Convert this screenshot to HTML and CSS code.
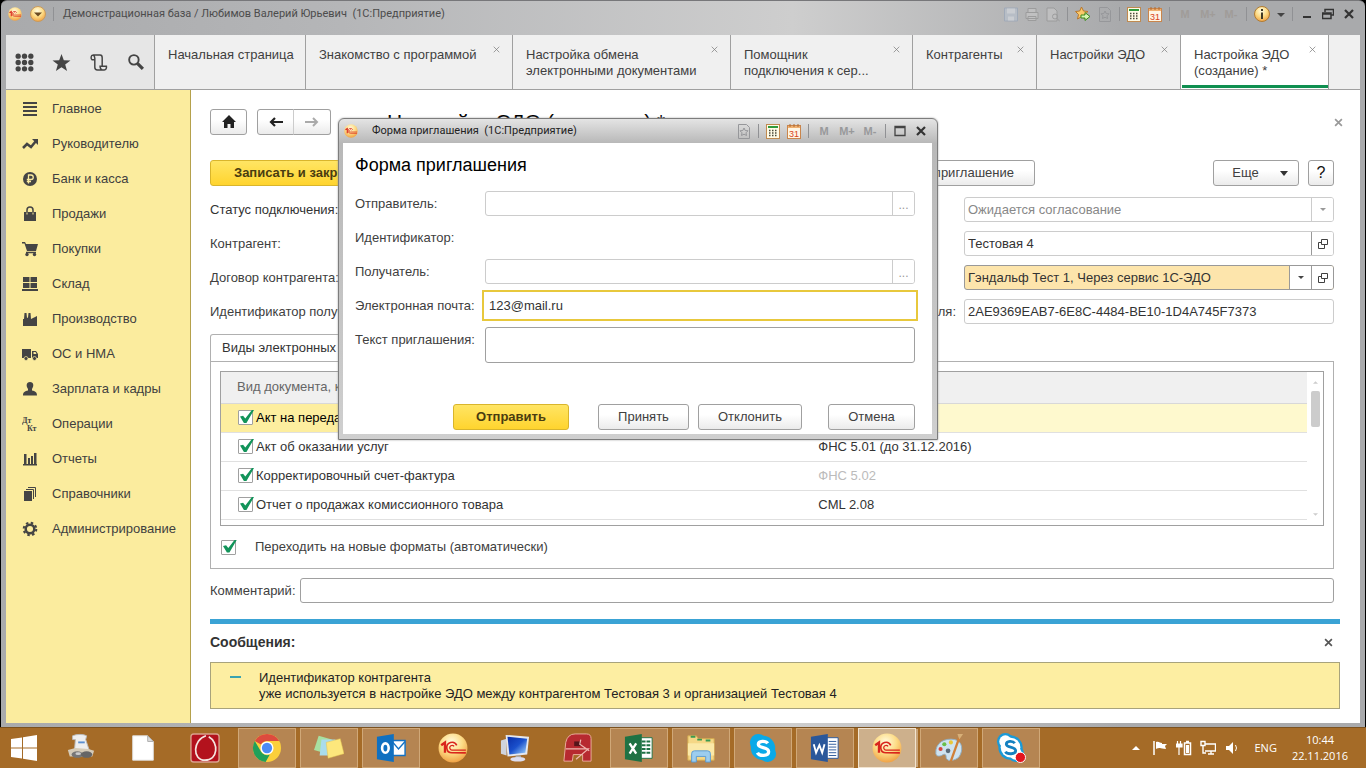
FILE: index.html
```
<!DOCTYPE html>
<html lang="ru">
<head>
  <meta charset="UTF-8">
  <meta name="viewport" content="width=device-width, initial-scale=1.0">
  <title>Демонстрационная база (1С:Предприятие)</title>
  <link rel="stylesheet" href="styles.css">
</head>
<body>

  <!-- shared icons -->
  <svg width="0" height="0" class="defs" aria-hidden="true">
    <defs>
      <radialGradient id="gold" cx="45%" cy="30%" r="75%">
        <stop offset="0" stop-color="#fffbe0"/>
        <stop offset="0.5" stop-color="#fddc86"/>
        <stop offset="1" stop-color="#ee9a3c"/>
      </radialGradient>
      <linearGradient id="screen" x1="0" y1="0" x2="1" y2="1">
        <stop offset="0" stop-color="#0a2ea8"/>
        <stop offset="0.5" stop-color="#1a50cc"/>
        <stop offset="1" stop-color="#a8dcff"/>
      </linearGradient>
    </defs>
    <symbol id="logo1c" viewBox="0 0 28 28">
      <circle cx="14" cy="14" r="13.500" fill="url(#gold)"/>
      <path d="M3 11.500l3.500-2.500v9.500" fill="none" stroke="#d9251c" stroke-width="2.200"/>
      <path d="M17.500 11.500a4.900 4.900 0 1 0-4.500 7h13" fill="none" stroke="#d9251c" stroke-width="1.500"/>
      <path d="M15 12.500a2.200 2.200 0 1 0-2 3.400h13" fill="none" stroke="#d9251c" stroke-width="1.200"/>
    </symbol>
    <symbol id="calc" viewBox="0 0 14 15">
      <rect x="0.500" y="0.500" width="13" height="14" fill="#fffbe6" stroke="#c08a50"/>
      <path d="M2 3h10" stroke="#2f9a3c" stroke-width="2"/>
      <path d="M3 6.500h9M3 9h9M3 11.500h9" stroke="#4a4a3a" stroke-width="1.500" stroke-dasharray="1.500 1.500"/>
    </symbol>
    <symbol id="calendar" viewBox="0 0 14 15">
      <rect x="0.500" y="1.500" width="13" height="13" fill="#fff6e4" stroke="#c9854c"/>
      <path d="M1 3h12" stroke="#f0b070" stroke-width="2"/>
      <path d="M3 0v3M7 0v3M11 0v3" stroke="#b06a30"/>
      <text x="7" y="13" text-anchor="middle" font-size="9" fill="#d8431c">31</text>
    </symbol>
    <symbol id="star-page" viewBox="0 0 14 15">
      <path d="M1.500.5h8l3 3v11h-11z" fill="none" stroke="currentColor"/>
      <path d="M7 4l1.200 2.500 2.800.3-2 2 .5 2.700L7 10.200l-2.500 1.300.5-2.700-2-2 2.800-.3z" fill="none" stroke="currentColor"/>
    </symbol>
    <symbol id="cross" viewBox="0 0 10 10">
      <path d="M1 1l8 8M9 1l-8 8" stroke="currentColor" fill="none"/>
    </symbol>
    <symbol id="open" viewBox="0 0 10 10">
      <path d="M3.500.5h6v5h-6zM3 3.500H.5v6h6V6" fill="none" stroke="currentColor"/>
    </symbol>
  </svg>

  <div class="window">
    <header class="titlebar">
      <svg class="logo"><use href="#logo1c"/></svg>
      <button class="round" aria-label="Меню"><svg viewBox="0 0 16 16"><circle cx="8" cy="8" r="7.500" fill="url(#gold)" stroke="#c99a5c"/><path d="M4 6.500h8L8 10.500z" fill="#6b4a22"/></svg></button>
      <i class="sep"></i>
      <span class="title">Демонстрационная база / Любимов Валерий Юрьевич&nbsp; (1С:Предприятие)</span>
      <div class="sys">
        <svg class="w14 pale" viewBox="0 0 14 14"><path d="M.5.500h13v13H.500z" fill="#b9c3d0" stroke="#92a2b8"/><path d="M3 1h8v5H3zM4 9h6v4H4z" fill="#d8dde4"/></svg>
        <svg class="w14 pale" viewBox="0 0 14 14"><path d="M3 1h8v4H3zM1 5h12v6H1zM3 9h8v4H3z" fill="#c9c9c9" stroke="#8d8d8d"/></svg>
        <svg class="w14 pale" viewBox="0 0 14 14"><path d="M1 .5h7l3 3v10H1z" fill="#c9c9c9" stroke="#8d8d8d"/><circle cx="9" cy="9" r="2.500" fill="none" stroke="#8d8d8d"/><path d="M11 11l3 3" stroke="#8d8d8d"/></svg>
        <i class="sep"></i>
        <svg class="w16" viewBox="0 0 16 16"><path d="M6.500 1l2 4 4.500.5-3.500 3 1 4.500-4-2.300L2.500 13l1-4.500L.5 5.500l4.200-.5z" fill="#fbc96a" stroke="#b8762a"/><path d="M6 9h4V6.500l5 4-5 4V12H6z" fill="#d8f5b0" stroke="#3b8a1e"/></svg>
        <svg class="w14 dim"><use href="#star-page"/></svg>
        <i class="sep"></i>
        <svg class="w14"><use href="#calc"/></svg>
        <svg class="w14"><use href="#calendar"/></svg>
        <i class="sep"></i>
        <span class="mem">M</span><span class="mem">M+</span><span class="mem">M-</span>
        <i class="sep"></i>
        <svg class="w16" viewBox="0 0 16 16"><circle cx="8" cy="8" r="7.500" fill="url(#gold)" stroke="#b07c34"/><path d="M8 3v2M8 6.500V13" stroke="#3f3a28" stroke-width="2"/></svg>
        <svg class="w8" viewBox="0 0 8 8"><path d="M0 3h8L4 7z" fill="#444"/></svg>
        <i class="sep"></i>
        <button aria-label="Свернуть"><svg class="w12" viewBox="0 0 12 12"><path d="M2 9h8" stroke="#333" stroke-width="2"/></svg></button>
        <button aria-label="Восстановить"><svg class="w12" viewBox="0 0 12 12"><path d="M3 4V1.500h8.500V7H9M.5 5h8.500v5.500H.5zM.5 6H9" fill="none" stroke="#333" stroke-width="1.500"/></svg></button>
        <button aria-label="Закрыть"><svg class="w12" viewBox="0 0 12 12"><path d="M2 2l8 8M10 2l-8 8" stroke="#333" stroke-width="2.200"/></svg></button>
      </div>
    </header>

    <nav class="tabs">
      <div class="tools">
        <svg viewBox="0 0 18 18"><g fill="#444"><circle cx="3" cy="3" r="2.500"/><circle cx="9" cy="3" r="2.500"/><circle cx="15" cy="3" r="2.500"/><circle cx="3" cy="9" r="2.500"/><circle cx="9" cy="9" r="2.500"/><circle cx="15" cy="9" r="2.500"/><circle cx="3" cy="15" r="2.500"/><circle cx="9" cy="15" r="2.500"/><circle cx="15" cy="15" r="2.500"/></g></svg>
        <svg viewBox="0 0 18 18"><path d="M9 1l2.200 5.800 6.300.2-5 3.900 1.800 6.100L9 13.500 3.700 17l1.800-6.100L.5 7l6.300-.2z" fill="#444"/></svg>
        <svg viewBox="0 0 18 18"><path d="M5.500 6.500H3C1.500 5.500 1.500 2 4 2h6.500C12 2 12.500 3 12.500 4.500v8h4c.3 2-.5 3.500-2 3.500H8c-1.500 0-2.500-1-2.500-2.500V5c0-1.500-.5-2.500-1.500-3M12.500 12.500h-2c0 1.500.5 3 2 3.500" fill="none" stroke="#444" stroke-width="1.400"/></svg>
        <svg viewBox="0 0 18 18"><circle cx="7.500" cy="6.500" r="4.500" fill="none" stroke="#444" stroke-width="1.800"/><path d="M11 10l5 5" stroke="#444" stroke-width="3"/></svg>
      </div>
      <a href="#" class="tab t-home">Начальная страница</a>
      <a href="#" class="tab t-intro">Знакомство с программой<svg><use href="#cross"/></svg></a>
      <a href="#" class="tab t-exchange">Настройка обмена электронными документами<svg><use href="#cross"/></svg></a>
      <a href="#" class="tab t-helper">Помощник подключения к сер...<svg><use href="#cross"/></svg></a>
      <a href="#" class="tab t-partners">Контрагенты<svg><use href="#cross"/></svg></a>
      <a href="#" class="tab t-settings">Настройки ЭДО<svg><use href="#cross"/></svg></a>
      <a href="#" class="tab t-create active">Настройка ЭДО (создание) *<svg><use href="#cross"/></svg></a>
    </nav>

    <div class="workspace">
      <nav class="sidebar">
        <a href="#"><svg viewBox="0 0 16 16"><path d="M1 2h14M1 6h14M1 10h14M1 14h14" stroke="#444" stroke-width="2"/></svg>Главное</a>
        <a href="#"><svg viewBox="0 0 16 16"><path d="M1 12l4-4 4 3 5-6" fill="none" stroke="#444" stroke-width="2.500"/><path d="M10 3h6v6z" fill="#444"/></svg>Руководителю</a>
        <a href="#"><svg viewBox="0 0 16 16"><circle cx="8" cy="8" r="7" fill="#444"/><path d="M6.500 12.500V4h2.500a2.200 2.200 0 0 1 0 4.500H4.800M4.800 10.500H9" fill="none" stroke="#fbec9e" stroke-width="1.300"/></svg>Банк и касса</a>
        <a href="#"><svg viewBox="0 0 16 16"><path d="M2 6h12v9H2z" fill="#444"/><path d="M5 8V4a3 3 0 0 1 6 0v4" fill="none" stroke="#444" stroke-width="1.500"/><path d="M5 6.500v2M11 6.500v2" stroke="#fbec9e"/></svg>Продажи</a>
        <a href="#"><svg viewBox="0 0 16 16"><path d="M0 1h3l1 2h12l-2 7H5L2.500 2.500H0z" fill="#444"/><path d="M4 11.500h10" stroke="#444" stroke-width="1.500"/><circle cx="5" cy="13.500" r="1.700" fill="#444"/><circle cx="12.500" cy="13.500" r="1.700" fill="#444"/></svg>Покупки</a>
        <a href="#"><svg viewBox="0 0 16 16"><path d="M1 1h6.500v5H1zM8.500 1H15v5H8.500zM1 7h6.500v5H1zM8.500 7H15v5H8.500zM0 13h16v2H0z" fill="#444"/></svg>Склад</a>
        <a href="#"><svg viewBox="0 0 16 16"><path d="M1 15V8h1l.5-6h2L5 7l1-.5L6.500 2h2L9 8l6-3v10z" fill="#444"/></svg>Производство</a>
        <a href="#"><svg viewBox="0 0 16 16"><path d="M0 3h9v9H0zM10 5h4l2 3v4h-6z" fill="#444"/><circle cx="4" cy="12.500" r="2" fill="#444" stroke="#fbec9e" stroke-width=".7"/><circle cx="12.500" cy="12.500" r="2" fill="#444" stroke="#fbec9e" stroke-width=".7"/><path d="M11.500 6h2l1 2h-3z" fill="#fbec9e"/></svg>ОС и НМА</a>
        <a href="#"><svg viewBox="0 0 16 16"><path d="M8 1c4 0 4 4 2 7v1.500c3 .5 5 1.500 5 5H1c0-3.500 2-4.500 5-5V8C4 5 4 1 8 1z" fill="#444"/></svg>Зарплата и кадры</a>
        <a href="#"><svg viewBox="0 0 16 16" font-size="8" font-weight="bold" fill="#444"><text x="0" y="7" class="serif">Дт</text><text x="5" y="15" class="serif">Кт</text></svg>Операции</a>
        <a href="#"><svg viewBox="0 0 16 16"><path d="M1 13h14v1.500H1zM2 3h2.500v10H2zM6 7h2v6H6zM9 5h2v8H9zM12 2h2.500v11H12z" fill="#444"/></svg>Отчеты</a>
        <a href="#"><svg viewBox="0 0 16 16"><path d="M2 5h8v10H2z" fill="#444"/><path d="M4 3.500h7.500V13M6 1.500h7.500V11" fill="none" stroke="#444"/></svg>Справочники</a>
        <a href="#"><svg viewBox="0 0 16 16"><circle cx="8" cy="8" r="4.300" fill="none" stroke="#444" stroke-width="2.500"/><circle cx="8" cy="8" r="6.300" fill="none" stroke="#444" stroke-width="2" stroke-dasharray="2.500 2.450"/></svg>Администрирование</a>
      </nav>

      <main class="content">
        <div class="heading">
          <button class="btn home" aria-label="Домой"><svg viewBox="0 0 14 14"><path d="M7 0l7 7h-2v6H8.500V9h-3v4H2V7H0z" fill="#222"/></svg></button>
          <div class="history">
            <button class="btn" aria-label="Назад"><svg viewBox="0 0 14 12"><path d="M14 6H3M6 2L2 6l4 4" fill="none" stroke="#222" stroke-width="2.200"/></svg></button>
            <button class="btn" aria-label="Вперед"><svg viewBox="0 0 14 12"><path d="M0 6h11M8 2l4 4-4 4" fill="none" stroke="#aaa" stroke-width="2"/></svg></button>
          </div>
          <h1>Настройка ЭДО (создание) *</h1>
          <button class="plain close-form" aria-label="Закрыть форму"><svg viewBox="0 0 8 8"><path d="M1 1l6 6M7 1l-6 6" stroke="#999" stroke-width="1.500"/></svg></button>
        </div>

        <div class="commands">
          <button class="btn primary">Записать и закрыть</button>
          <button class="btn send">Отправить приглашение</button>
          <button class="btn more">Еще <svg viewBox="0 0 8 5"><path d="M0 0h8L4 5z" fill="#333"/></svg></button>
          <button class="btn help">?</button>
        </div>

        <div class="fields">
          <label class="strong" for="state">Статус подключения:</label>
          <div class="field disabled last">
            <select id="state" disabled><option>Ожидается согласование</option></select>
            <span class="pick"><svg class="arrow" viewBox="0 0 6 3"><path d="M0 0h6L3 3z" fill="#999"/></svg></span>
          </div>
          <label for="partner">Контрагент:</label>
          <div class="field last">
            <input id="partner" type="text" value="Тестовая 4">
            <button class="pick" aria-label="Открыть"><svg><use href="#open"/></svg></button>
          </div>
          <label for="contract">Договор контрагента:</label>
          <div class="field marked last">
            <select id="contract"><option>Гэндальф Тест 1, Через сервис 1С-ЭДО</option></select>
            <span class="pick"><svg class="arrow" viewBox="0 0 6 3"><path d="M0 0h6L3 3z" fill="#444"/></svg></span>
            <button class="pick" aria-label="Открыть"><svg><use href="#open"/></svg></button>
          </div>
          <label for="rcpt">Идентификатор получателя:</label>
          <label class="right" for="sender-id">Идентификатор отправителя:</label>
          <div class="field last"><input id="sender-id" type="text" value="2AE9369EAB7-6E8C-4484-BE10-1D4A745F7373"></div>
        </div>

        <section class="docs">
          <a href="#" class="docs-tab">Виды электронных документов</a>
          <div class="docs-panel">
            <div class="grid">
              <table>
                <thead>
                  <tr><th>Вид документа, каталог</th><th></th></tr>
                </thead>
                <tbody>
                  <tr class="current"><td><label><input type="checkbox" checked>Акт на передачу прав</label></td><td></td></tr>
                  <tr><td><label><input type="checkbox" checked>Акт об оказании услуг</label></td><td>ФНС 5.01 (до 31.12.2016)</td></tr>
                  <tr><td><label><input type="checkbox" checked>Корректировочный счет-фактура</label></td><td class="muted">ФНС 5.02</td></tr>
                  <tr><td><label><input type="checkbox" checked>Отчет о продажах комиссионного товара</label></td><td>CML 2.08</td></tr>
                </tbody>
              </table>
              <div class="scroll">
                <svg viewBox="0 0 6 3"><path d="M0 3h6L3 0z" fill="#ccc"/></svg>
                <i></i>
                <svg viewBox="0 0 6 3"><path d="M0 0h6L3 3z" fill="#ccc"/></svg>
              </div>
            </div>
            <label class="auto"><input type="checkbox" checked>Переходить на новые форматы (автоматически)</label>
          </div>
        </section>

        <div class="comment">
          <label for="comment">Комментарий:</label>
          <div class="field dark"><input id="comment" type="text"></div>
        </div>

        <section class="messages">
          <div class="messages-head">
            <h2>Сообщения:</h2>
            <button class="plain" aria-label="Закрыть сообщения"><svg viewBox="0 0 8 8"><path d="M1 1l6 6M7 1l-6 6" stroke="#555" stroke-width="1.500"/></svg></button>
          </div>
          <div class="message">
            <i></i>
            <p>Идентификатор контрагента<br>уже используется в настройке ЭДО между контрагентом Тестовая 3 и организацией Тестовая 4</p>
          </div>
        </section>
      </main>
    </div>

    <div class="dialog" role="dialog" aria-labelledby="dialog-title">
      <div class="dialog-bar">
        <svg class="logo"><use href="#logo1c"/></svg>
        <span class="title">Форма приглашения&nbsp; (1С:Предприятие)</span>
        <div class="sys">
          <svg class="w14 dim"><use href="#star-page"/></svg>
          <i class="sep"></i>
          <svg class="w14"><use href="#calc"/></svg>
          <svg class="w14"><use href="#calendar"/></svg>
          <i class="sep"></i>
          <span class="mem">M</span><span class="mem">M+</span><span class="mem">M-</span>
          <i class="sep"></i>
          <button aria-label="Развернуть"><svg class="w12" viewBox="0 0 12 12"><path d="M1 1.500h10v9H1zM1 2.500h10" fill="none" stroke="#444" stroke-width="1.300"/></svg></button>
          <button aria-label="Закрыть"><svg class="w12" viewBox="0 0 12 12"><path d="M2 2l8 8M10 2l-8 8" stroke="#333" stroke-width="2.200"/></svg></button>
        </div>
      </div>
      <form class="dialog-body">
        <h2 id="dialog-title">Форма приглашения</h2>
        <div class="row">
          <label for="from">Отправитель:</label>
          <div class="field disabled"><input id="from" type="text"><button type="button" class="pick">...</button></div>
        </div>
        <div class="row"><span>Идентификатор:</span></div>
        <div class="row">
          <label for="to">Получатель:</label>
          <div class="field disabled"><input id="to" type="text"><button type="button" class="pick">...</button></div>
        </div>
        <div class="row">
          <label for="mail">Электронная почта:</label>
          <div class="field focused"><input id="mail" type="text" value="123@mail.ru"></div>
        </div>
        <div class="row tall">
          <label for="text">Текст приглашения:</label>
          <textarea id="text"></textarea>
        </div>
        <div class="actions">
          <button type="button" class="btn primary">Отправить</button>
          <button type="button" class="btn accept">Принять</button>
          <button type="button" class="btn decline">Отклонить</button>
          <button type="button" class="btn cancel">Отмена</button>
        </div>
      </form>
    </div>
  </div>

  <footer class="taskbar">
    <button class="start" aria-label="Пуск"><svg viewBox="0 0 28 28"><path d="M1 5l11-1.600v10H1zM13 3.200L27 1v12.400H13zM1 14.600h11v10L1 23zM13 14.600h14V27l-14-2.200z" fill="#fff"/></svg></button>
    <button class="app" aria-label="Сервер сценариев"><svg viewBox="0 0 32 32"><path d="M7 3c4-2 12-2 15 0l-1 4 4 12H9l1-12-3 0z" fill="#eee" stroke="#bbb"/><path d="M13 10h7" stroke="#5b8fd0" stroke-width="2"/><path d="M2 18l8-2 14 1 6 2-2 6H4z" fill="#d5cbb8"/><ellipse cx="12" cy="23" rx="6" ry="3.500" fill="#777"/><ellipse cx="22" cy="23" rx="6" ry="3.500" fill="#666"/><ellipse cx="13" cy="22" rx="3" ry="1.500" fill="#ccc"/></svg></button>
    <button class="app" aria-label="Документ"><svg viewBox="0 0 32 32"><path d="M5 3h16l6 6v20H5z" fill="#fff" stroke="#e0e0e0"/><path d="M21 3v6h6z" fill="#ddd" stroke="#aaa"/></svg></button>
    <button class="app" aria-label="Красное приложение"><svg viewBox="0 0 32 32"><rect x="1" y="1" width="30" height="30" rx="3" fill="#b3121d" stroke="#d9a08c" stroke-width="1.500"/><path d="M17 3C3 7 2 29 16 29S31 10 20 4" fill="none" stroke="#f5e5e0" stroke-width="1.800"/></svg></button>
    <button class="app open" aria-label="Chrome"><svg viewBox="0 0 32 32"><circle cx="16" cy="16" r="15" fill="#fbcf3b"/><path d="M16 1a15 15 0 0 1 13 7.500H16a7.500 7.500 0 0 0-6.500 3.750L3 8.500A15 15 0 0 1 16 1z" fill="#dd4b3e"/><path d="M3 8.500l6.500 11.250A7.500 7.500 0 0 0 19 23l-4.500 8A15 15 0 0 1 3 8.500z" fill="#21a05a"/><circle cx="16" cy="16" r="7" fill="#fff"/><circle cx="16" cy="16" r="5.500" fill="#4c8bf5"/></svg></button>
    <button class="app open" aria-label="Заметки"><svg viewBox="0 0 32 32"><path d="M5 3l14 4-5 15L0 18z" fill="#a8e0a0"/><path d="M8 7h15l-2 17H6z" fill="#a9dcec"/><path d="M13 10l15-4 4 16-17 5z" fill="#fde77c" stroke="#e0c050" stroke-width=".5"/></svg></button>
    <button class="app open" aria-label="Outlook"><svg viewBox="0 0 32 32"><path d="M17 8h14v16H17z" fill="#fff" stroke="#1272c4" stroke-width="1.500"/><path d="M18 10l6 7 7-8" fill="none" stroke="#1272c4" stroke-width="1.500"/><path d="M1 4l18-3v30L1 28z" fill="#1070c0"/><ellipse cx="10" cy="16" rx="3.500" ry="5" fill="none" stroke="#fff" stroke-width="2.800"/></svg></button>
    <button class="app" aria-label="1С"><svg><use href="#logo1c"/></svg></button>
    <button class="app" aria-label="Удаленный стол"><svg viewBox="0 0 32 32"><path d="M1 8l6-2v18l-6-2z" fill="#d0d4dc"/><path d="M6 2l25 2-2 19-21 2z" fill="#e6e8ee"/><path d="M8 4l21 2-2 15-17 2z" fill="url(#screen)"/><path d="M17 24h5l1 3h-7z" fill="#aaa"/><ellipse cx="19" cy="28" rx="8" ry="2.500" fill="#dde"/></svg></button>
    <button class="app" aria-label="Консоль"><svg viewBox="0 0 32 32"><path d="M2 30L4 10q2-9 10-9h12q5 0 5 5v24h-9v-7H12l-1 7z" fill="#b72a30" stroke="#ecb0a0"/><path d="M13 9h7v5h-7z" fill="#54141a"/><path d="M4 17h24L15 28M20 7l-1 5 10 7" fill="none" stroke="#f0b8b0" stroke-width="1.300"/></svg></button>
    <button class="app open" aria-label="Excel"><svg viewBox="0 0 32 32"><path d="M17 5h13v22H17z" fill="#fff" stroke="#1f7244"/><path d="M19 9h9M19 13h9M19 17h9M19 21h9" stroke="#1f7244" stroke-width="2" stroke-dasharray="4 1"/><path d="M1 4l18-3v30L1 28z" fill="#1f7244"/><path d="M6 11l7 11M13 11L6 22" stroke="#fff" stroke-width="2.500"/></svg></button>
    <button class="app open" aria-label="Проводник"><svg viewBox="0 0 32 32"><path d="M2 3h9l2 3h17v23H2z" fill="#f5d786" stroke="#d4ab50"/><path d="M5 4h5M12 7h5M21 8h5" stroke="#3a9a50" stroke-width="2"/><path d="M2 11h28v13H2z" fill="#fbe9a8"/><path d="M6 31v-9q0-3 3-3h14q3 0 3 3v9h-5v-6H11v6z" fill="#9ccdee" stroke="#5b9bd0"/></svg></button>
    <button class="app open" aria-label="Skype"><svg viewBox="0 0 32 32"><circle cx="11" cy="10" r="9" fill="#0aa9e8"/><circle cx="16" cy="16" r="13" fill="#0aa9e8"/><circle cx="21" cy="22" r="9" fill="#0aa9e8"/><path d="M21 11c-2-3-10-3-10 1 0 5 11 2 11 8 0 5-10 5-12 1" fill="none" stroke="#fff" stroke-width="3.500"/></svg></button>
    <button class="app open" aria-label="Word"><svg viewBox="0 0 32 32"><path d="M17 5h13v22H17z" fill="#fff" stroke="#2a579a"/><path d="M20 9h8M20 12h8M20 15h8M20 18h8M20 21h8M20 24h8" stroke="#2a579a"/><path d="M1 4l18-3v30L1 28z" fill="#2a579a"/><path d="M4 12l2.500 9L10 13l3 8 2.500-9" fill="none" stroke="#fff" stroke-width="2"/></svg></button>
    <button class="app open current" aria-label="1С:Предприятие"><svg><use href="#logo1c"/></svg></button>
    <button class="app open" aria-label="Paint"><svg viewBox="0 0 32 32"><path d="M2 22C1 10 12 5 22 7c9 2 9 12 5 18-4 5-14 6-14 1 0-4-2-4-5-2-3 1-5 1-6-2z" fill="#cfe3ef" stroke="#8fb0c8"/><circle cx="7" cy="17" r="2.200" fill="#d8463a"/><circle cx="11" cy="12" r="2.200" fill="#6abf4a"/><circle cx="18" cy="10" r="2.200" fill="#e8c83a"/><circle cx="15" cy="19" r="2.500" fill="#5a6a78"/><path d="M27 5l-9 25" stroke="#d08038" stroke-width="2.500"/><path d="M25 1l6 0-4 6z" fill="#d8b078"/></svg></button>
    <button class="app open" aria-label="Skype для бизнеса"><svg viewBox="0 0 32 32"><g fill="#1a9ad8"><circle cx="10" cy="9" r="9"/><circle cx="21" cy="22" r="9"/><circle cx="15.500" cy="15.500" r="13"/></g><g fill="#fff"><circle cx="10" cy="9" r="6.500"/><circle cx="21" cy="22" r="6.500"/><circle cx="15.500" cy="15.500" r="10.500"/></g><path d="M20 11c-2-3-9-3-9 1 0 4 10 2 10 7 0 4-9 4-11 1" fill="none" stroke="#1480c0" stroke-width="3"/><circle cx="26" cy="26" r="5.500" fill="#e3141e" stroke="#fff"/></svg></button>

    <div class="tray">
      <svg viewBox="0 0 16 16"><path d="M4 10h8L8 6z" fill="#fff"/></svg>
      <svg viewBox="0 0 16 16"><path d="M2 1v14" stroke="#fff" stroke-width="1.500"/><path d="M4 2c3-1 4 1 6 1v1h5l-2 2 1 3c-3 0-5-1-6-1s-3 0-4 1z" fill="#fff"/></svg>
      <svg viewBox="0 0 16 16"><path d="M1.500 1v3M4.500 1v3M0 4h6v3H0zM3 7v8" stroke="#fff" fill="#fff" stroke-width="1.200"/><path d="M8.500 3h6v11.500h-6zM10 1.500h3" fill="none" stroke="#fff" stroke-width="1.500"/><path d="M10 5h3v8h-3z" fill="#fff"/></svg>
      <svg viewBox="0 0 16 16"><path d="M5 4h10.500v7H5M8 14h6M11 11v3M1 1.500h4v4H1zM3 5.500V13h3" fill="none" stroke="#fff" stroke-width="1.400"/></svg>
      <svg viewBox="0 0 16 16"><path d="M2 6h3l4-4v12l-4-4H2z" fill="#fff"/><path d="M11.500 5q2 3 0 6" fill="none" stroke="#fff"/></svg>
      <span class="lang">ENG</span>
      <div class="clock">10:44<br>22.11.2016</div>
    </div>
  </footer>

</body>
</html>
```
FILE: styles.css
```
* {
  box-sizing: border-box;
}
body {
  margin: 0;
  min-height: 100vh;
  display: flex;
  flex-direction: column;
  font-family: "Liberation Sans", Arial, sans-serif;
  font-size: 13px;
  line-height: 16px;
  color: #404040;
  background: #000;
}
button, input, select, textarea {
  font: inherit;
  color: inherit;
  margin: 0;
}
a {
  color: inherit;
  text-decoration: none;
}
h1, h2, p {
  margin: 0;
}
svg {
  display: block;
  flex: none;
}
.defs {
  position: absolute;
}
.serif {
  font-family: "Liberation Serif", serif;
}

/* main window */
.window {
  position: relative;
  flex: 1;
  display: flex;
  flex-direction: column;
  margin: 0 1px;
  padding: 0 5px 4px;
  border-top: 1px solid #77777a;
  border-radius: 6px 6px 0 0;
  background: linear-gradient(90deg, #a9aaac, #b5b6b8 25%, #cecece 58%, #a9aaac 82%, #a9aaac);
}
.titlebar {
  height: 34px;
  padding-bottom: 8px;
  display: flex;
  align-items: center;
}
.titlebar .logo {
  width: 14px;
  height: 14px;
  margin-left: 2px;
}
.round {
  width: 16px;
  height: 16px;
  padding: 0;
  margin: 0 7px 0 8px;
  border: 0;
  background: none;
}
.title {
  font-family: Roboto, sans-serif;
  font-size: 11px;
}
.titlebar .title {
  margin-left: 9px;
  color: #4c4c4c;
}
.sep {
  width: 1px;
  height: 14px;
  background: #909194;
}
.sys {
  display: flex;
  align-items: center;
  gap: 7px;
  margin-left: auto;
  padding-right: 4px;
}
.sys button {
  padding: 0 1px;
  border: 0;
  background: none;
}
.w8 { width: 8px; height: 8px; }
.w12 { width: 12px; height: 12px; }
.w14 { width: 14px; height: 15px; }
.w16 { width: 16px; height: 16px; }
.pale { opacity: 0.6; }
.dim { color: #96979a; }
.mem {
  width: 16px;
  font-size: 11px;
  font-weight: bold;
  text-align: center;
  color: #98999b;
}
.titlebar .mem {
  color: #a09c99;
}

/* tab strip */
.tabs {
  height: 55px;
  display: flex;
  background: #f0f0f0;
  border-bottom: 1px solid #a0a0a0;
}
.tools {
  width: 148px;
  padding: 0 9px;
  display: flex;
  align-items: center;
  justify-content: space-between;
  background: #e6e6e6;
}
.tools svg {
  width: 19px;
  height: 19px;
}
.tab {
  position: relative;
  padding: 12px 30px 0 13px;
  border-left: 1px solid #a0a0a0;
  background: #f0f0f0;
}
.tab svg {
  position: absolute;
  top: 11px;
  right: 12px;
  width: 7px;
  height: 7px;
  color: #777;
}
.t-home { width: 151px; padding-right: 0; }
.t-intro { width: 207px; }
.t-exchange { width: 218px; }
.t-helper { width: 182px; }
.t-partners { width: 124px; }
.t-settings { width: 144px; }
.t-create { width: 149px; }
.tab.active {
  background: #fff;
  border-right: 1px solid #a0a0a0;
  box-shadow: inset 1px 0 #fff, inset 0 -1px #fff, inset 0 -4px #0f8f50;
}

.workspace {
  flex: 1;
  display: flex;
}
.sidebar {
  flex: none;
  width: 185px;
  padding-top: 1px;
  background: #fbec9e;
  border-right: 1px solid #b5a14c;
}
.sidebar a {
  height: 35px;
  padding-left: 16px;
  display: flex;
  align-items: center;
  gap: 14px;
}
.sidebar svg {
  width: 16px;
  height: 16px;
}

/* form */
.content {
  flex: 1;
  min-width: 0;
  padding: 19px 20px 10px 19px;
  background: #fff;
}
.heading, .commands, .fields, .docs, .comment {
  margin-right: 6px;
}
.heading {
  display: flex;
  align-items: center;
  height: 26px;
}
.heading h1 {
  margin-left: 56px;
  font-size: 21px;
  font-weight: normal;
  line-height: 24px;
  color: #000;
}
.btn {
  height: 26px;
  padding: 0 12px;
  display: flex;
  align-items: center;
  justify-content: center;
  white-space: nowrap;
  border: 1px solid #a0a0a0;
  border-radius: 3px;
  background: linear-gradient(#fff, #fff 40%, #ebebeb);
}
.btn.primary {
  font-weight: bold;
  color: #4a3c10;
  border-color: #d9b52c;
  background: linear-gradient(#ffe564, #ffd42e);
}
.home {
  width: 37px;
}
.home svg {
  width: 14px;
  height: 14px;
}
.history {
  display: flex;
  margin-left: 10px;
}
.history .btn {
  width: 37px;
  border-radius: 3px 0 0 3px;
}
.history .btn + .btn {
  width: 38px;
  margin-left: -1px;
  border-left-color: #ccc;
  border-radius: 0 3px 3px 0;
}
.history svg {
  width: 14px;
  height: 12px;
}
.btn svg {
  flex: none;
}
.plain {
  padding: 0;
  border: 0;
  background: none;
}
.plain svg {
  width: 9px;
  height: 9px;
}
.close-form {
  margin-left: auto;
  margin-right: -9px;
}
.commands {
  display: flex;
  margin-top: 25px;
}
.commands .primary {
  padding: 0 23px;
}
.send {
  margin-left: auto;
  padding: 0 20px;
}
.more {
  width: 86px;
  margin-left: 178px;
  gap: 21px;
  padding: 0 6px 0 14px;
}
.more svg {
  width: 8px;
  height: 5px;
}
.help {
  width: 26px;
  margin-left: 9px;
  padding: 0;
  font-size: 16px;
  color: #111;
}
.fields {
  display: grid;
  grid-template-columns: 180px 1fr 370px;
  grid-auto-rows: 25px;
  align-items: center;
  gap: 9px 8px;
  margin-top: 11px;
}
.fields .last {
  grid-column: 3;
}
.fields .right {
  text-align: right;
}
.strong {
  color: #333;
}
.field {
  display: flex;
  flex: 1;
  height: 25px;
  border: 1px solid #ccc;
  border-radius: 3px;
  background: #fff;
  overflow: hidden;
}
.field input, .field select {
  flex: 1;
  min-width: 0;
  padding: 0 3px;
  border: 0;
  outline: 0;
  background: none;
  color: #333;
  appearance: none;
}
.field .pick {
  width: 22px;
  padding: 0;
  display: flex;
  align-items: center;
  justify-content: center;
  border: 0;
  border-left: 1px solid #999;
  background: #fff;
}
.pick svg {
  width: 10px;
  height: 10px;
}
.pick .arrow {
  width: 6px;
  height: 3px;
}
.field.disabled .pick {
  color: #999;
  border-color: #ccc;
}
.field select:disabled {
  color: #888;
  opacity: 1;
}
.field.marked {
  border-color: #999;
  background: #fde5ac;
}
.field.dark {
  border-color: #a0a0a0;
}

/* document kinds */
.docs {
  margin-top: 10px;
}
.docs-tab {
  display: block;
  width: 220px;
  height: 28px;
  padding: 5px 11px;
  border: 1px solid #b0b0b0;
  border-bottom: 0;
  border-radius: 3px 0 0 0;
  color: #333;
}
.docs-panel {
  margin-top: -1px;
  padding: 9px;
  border: 1px solid #b0b0b0;
}
.grid {
  display: flex;
  height: 155px;
  border: 1px solid #a0a0a0;
}
.grid table {
  flex: 1;
  border-collapse: collapse;
  table-layout: fixed;
  align-self: flex-start;
}
.grid th {
  height: 31px;
  padding: 0 16px;
  font-weight: normal;
  text-align: left;
  color: #666;
  background: #f0f0f0;
  border-bottom: 1px solid #d8d8d8;
}
.grid td {
  height: 29px;
  padding: 0;
  border-bottom: 1px solid #e0e0e0;
  color: #333;
}
.grid td:first-child {
  padding-left: 17px;
}
.grid td:last-child {
  width: 45%;
}
.grid td.muted {
  color: #bbb;
}
.grid .current td {
  color: #000;
  background: #fdee9f;
}
.grid .current td:last-child {
  background: #fef9ce;
}
.grid label {
  display: flex;
  align-items: center;
  gap: 3px;
}
input[type="checkbox"] {
  position: relative;
  width: 15px;
  height: 15px;
  appearance: none;
  border: 1px solid #a0a0a0;
  border-radius: 1px;
  background: #fff;
}
input[type="checkbox"]:checked::after {
  content: "";
  position: absolute;
  top: -1px;
  left: 1px;
  width: 14px;
  height: 13px;
  background: #12945a;
  clip-path: polygon(0 50%, 22% 45%, 38% 66%, 85% 0, 100% 0, 46% 100%, 28% 100%);
}
.scroll {
  width: 16px;
  padding: 9px 3px 9px 4px;
  display: flex;
  flex-direction: column;
  align-items: center;
}
.scroll svg {
  width: 5px;
  height: 3px;
}
.scroll i {
  width: 9px;
  height: 36px;
  margin: 7px 0 auto;
  border-radius: 2px;
  background: #ccc;
}
.auto {
  display: flex;
  align-items: center;
  gap: 19px;
  margin: 13px 1px 4px;
}
.comment {
  display: flex;
  align-items: center;
  gap: 4px;
  margin-top: 9px;
}

/* messages */
.messages {
  margin-top: 16px;
  border-top: 5px solid #3aa3d5;
}
.messages-head {
  height: 38px;
  padding: 0 7px 2px 0;
  display: flex;
  align-items: center;
  justify-content: space-between;
}
.messages h2 {
  font-size: 14px;
  line-height: 16px;
  color: #333;
}
.message {
  display: flex;
  padding: 7px 19px 6px;
  border: 1px solid #a8a37c;
  background: #fdeea2;
  color: #222;
}
.message i {
  width: 11px;
  height: 2px;
  margin: 6px 18px 0 0;
  background: #3aa3b0;
}

/* invitation window */
.dialog {
  position: absolute;
  top: 117px;
  left: 337px;
  width: 600px;
  padding: 0 5px 5px 4px;
  border: 1px solid #7d7d7d;
  border-radius: 6px 6px 0 0;
  background: linear-gradient(#e4e4e4, #b8b8b8 24px, #cfcfcf);
  box-shadow: 0 0 2px #999;
}
.dialog-bar {
  height: 24px;
  display: flex;
  align-items: center;
}
.dialog .logo {
  width: 14px;
  height: 14px;
  margin: 0 14px 0 1px;
}
.dialog .title {
  color: #222;
}
.dialog-body {
  padding: 12px 17px 4px 12px;
  background: #fff;
}
.dialog h2 {
  font-size: 18px;
  font-weight: normal;
  line-height: 20px;
  color: #000;
  margin-bottom: 16px;
}
.row {
  display: flex;
  align-items: center;
  height: 25px;
  margin-bottom: 9px;
}
.row label {
  width: 130px;
}
.row .pick {
  font-size: 12px;
  padding-top: 3px;
}
.field.focused {
  height: 31px;
  margin: 0 -3px;
  border: 2px solid #e8c83c;
  border-radius: 0;
}
.field.focused input {
  padding: 0 5px;
}
.row.tall {
  height: 36px;
  align-items: flex-start;
}
.tall label {
  padding-top: 5px;
}
textarea {
  flex: 1;
  height: 36px;
  border: 1px solid #a0a0a0;
  border-radius: 3px;
  resize: none;
  outline: 0;
}
.actions {
  display: flex;
  justify-content: flex-end;
  margin-top: 41px;
}
.actions .primary {
  width: 116px;
  margin-right: 29px;
}
.accept {
  width: 91px;
  margin-right: 9px;
}
.decline {
  width: 104px;
  margin-right: 26px;
}
.cancel {
  width: 87px;
}

/* taskbar */
.taskbar {
  height: 41px;
  display: flex;
  align-items: stretch;
  gap: 4px;
  border-top: 1px solid #7c5220;
  background: #a56b27;
  color: #fff;
}
.taskbar button {
  padding: 0;
  display: flex;
  align-items: center;
  justify-content: center;
  border: 1px solid transparent;
  background: none;
}
.start {
  width: 48px;
}
.start svg {
  width: 28px;
  height: 28px;
}
.app {
  width: 58px;
}
.app svg {
  width: 30px;
  height: 30px;
}
.taskbar .open {
  border-color: #d0a878;
  background: #b58552;
}
.taskbar .current {
  border-color: #f2e4d0;
  background: #cdb08c;
  box-shadow: 3px 0 0 -1px #c9a67c;
}
.tray {
  margin-left: auto;
  padding-right: 18px;
  display: flex;
  align-items: center;
  gap: 8px;
  font-family: "Open Sans", sans-serif;
  font-size: 11px;
}
.tray svg {
  width: 16px;
  height: 16px;
}
.lang {
  margin: 0 7px 0 6px;
}
.clock {
  text-align: center;
}
```
